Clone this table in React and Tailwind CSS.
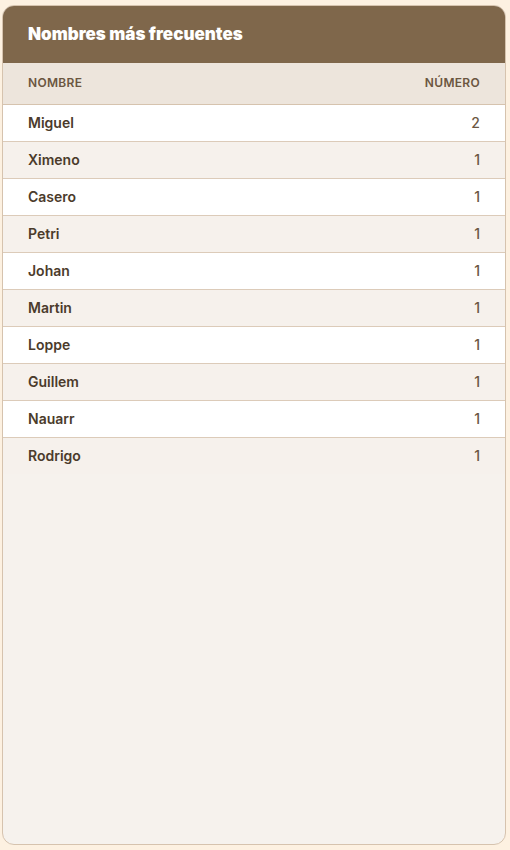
import React from 'react';

const rows = [
  { name: 'Miguel', count: 2 },
  { name: 'Ximeno', count: 1 },
  { name: 'Casero', count: 1 },
  { name: 'Petri', count: 1 },
  { name: 'Johan', count: 1 },
  { name: 'Martin', count: 1 },
  { name: 'Loppe', count: 1 },
  { name: 'Guillem', count: 1 },
  { name: 'Nauarr', count: 1 },
  { name: 'Rodrigo', count: 1 },
];

const App = () => {
  return (
    <div className="min-h-[850px] bg-[#fdf1e1] pt-[5px] pb-[5px] pl-[2px] pr-[4px]" style={{ fontFamily: 'Inter, "Noto Sans", sans-serif' }}>
      <div className="h-[840px] bg-[#f6f2ed] border border-[#d6c3ae] rounded-xl overflow-hidden flex flex-col">
        <div className="h-[57px] bg-[#7f674b] flex items-center px-[25px] shrink-0">
          <h2 className="text-[17px] font-black text-white">Nombres más frecuentes</h2>
        </div>
        <table className="w-full border-collapse">
          <thead>
            <tr className="bg-[#ede5dc] border-b border-[#d6c3ae]">
              <th className="h-[41px] px-[25px] text-left text-[12px] font-semibold uppercase tracking-[0.3px] text-[#6b5640]">Nombre</th>
              <th className="h-[41px] px-[25px] text-right text-[12px] font-semibold uppercase tracking-[0.3px] text-[#6b5640]">Número</th>
            </tr>
          </thead>
          <tbody>
            {rows.map((r, i) => (
              <tr key={r.name} className={`${i % 2 === 0 ? 'bg-white' : 'bg-[#f6f1ec]'} ${i < rows.length - 1 ? 'border-b border-[#dccbb9]' : ''}`}>
                <td className="h-[37px] px-[25px] text-[14px] font-semibold text-[#4b3b2b]">{r.name}</td>
                <td className="h-[37px] px-[25px] text-right text-[14px] font-medium text-[#6b5742]">{r.count}</td>
              </tr>
            ))}
          </tbody>
        </table>
      </div>
    </div>
  );
};

export default App;
